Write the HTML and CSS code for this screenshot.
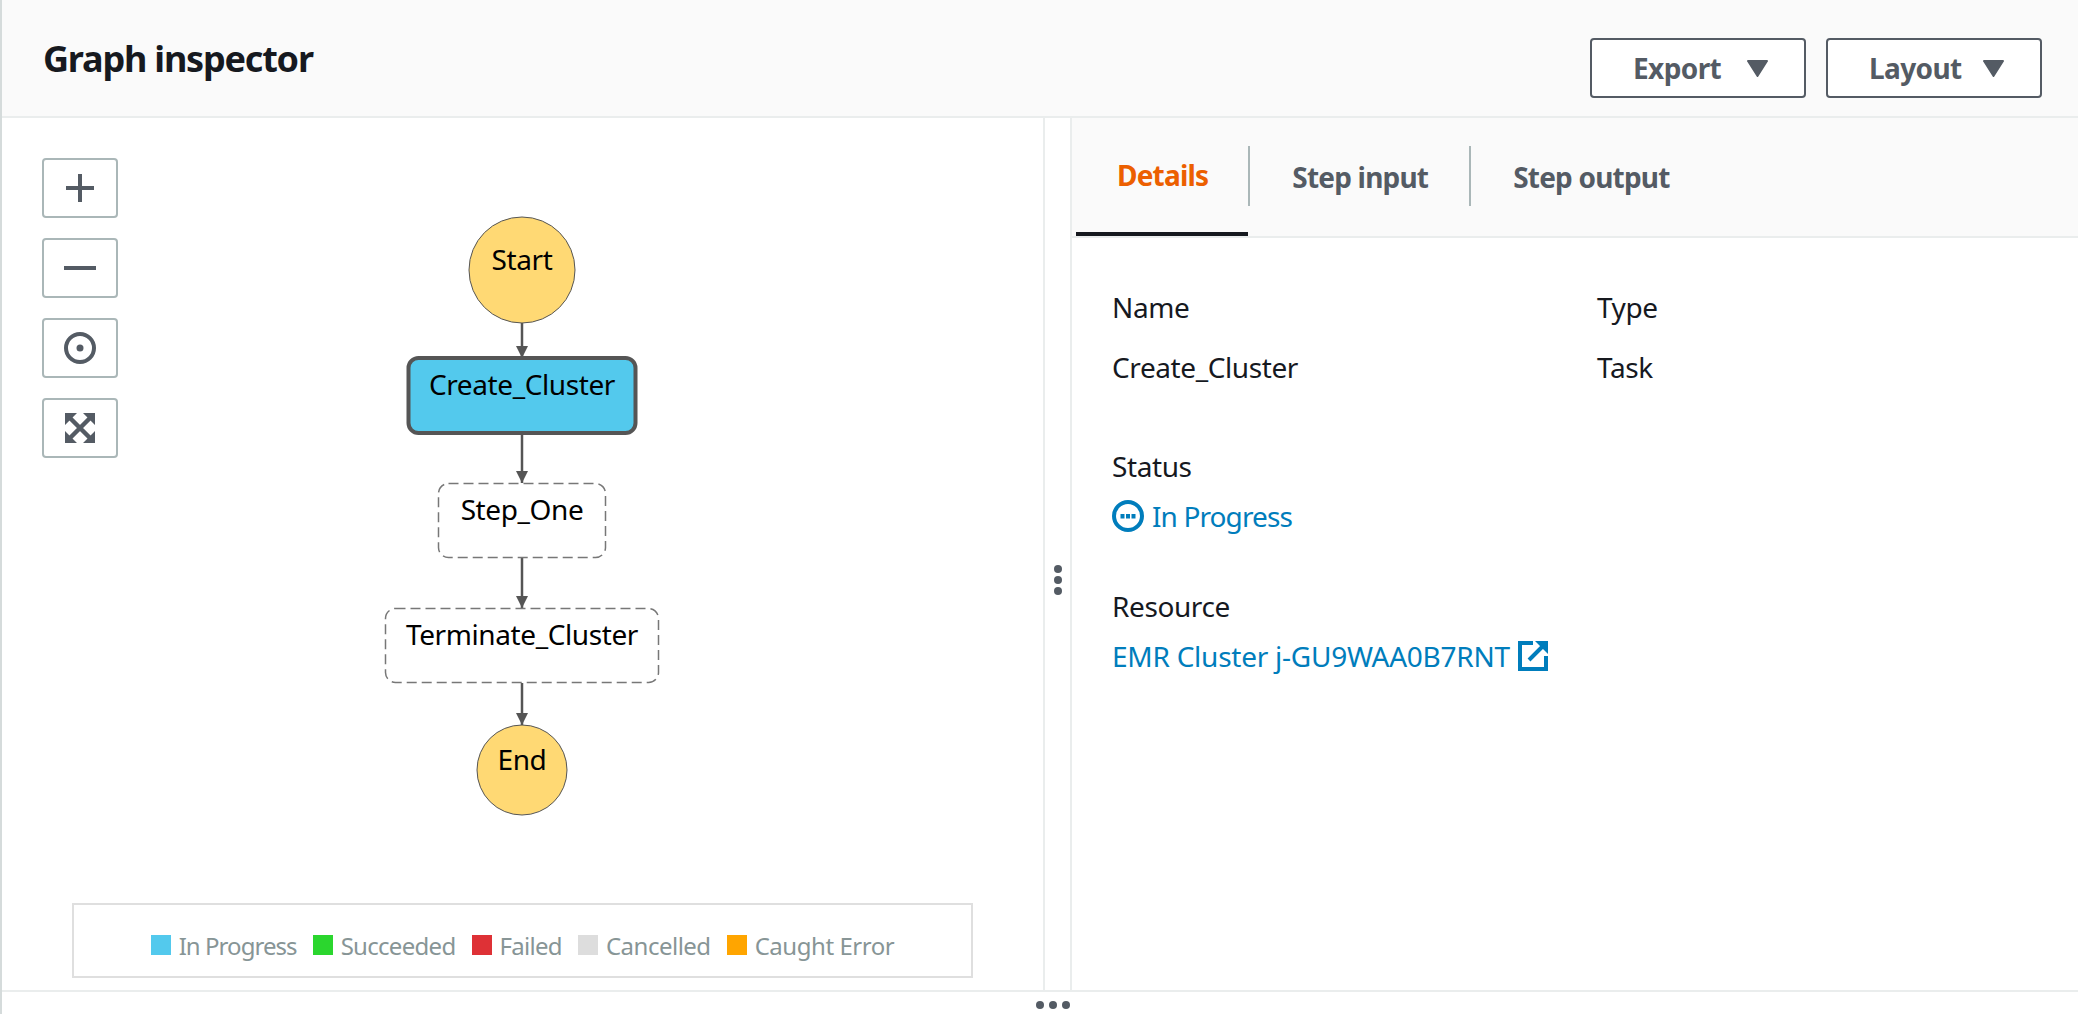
FILE: index.html
```html
<!DOCTYPE html>
<html lang="en">
<head>
    <meta charset="UTF-8">
    <meta name="viewport" content="width=device-width, initial-scale=1.0">
    <title>Graph inspector</title>
    <link rel="stylesheet" href="styles.css">
</head>
<body>

<div class="inspector">
    <header class="top-bar">
        <h2 class="title">Graph inspector</h2>
        <div class="actions">
            <button class="drop-btn">Export <svg class="caret" viewBox="0 0 21 17"><path d="M1 0h19a1 1 0 0 1 .8 1.6L11.3 16.4a1 1 0 0 1-1.6 0L.2 1.6A1 1 0 0 1 1 0z"/></svg></button>
            <button class="drop-btn">Layout <svg class="caret" viewBox="0 0 21 17"><path d="M1 0h19a1 1 0 0 1 .8 1.6L11.3 16.4a1 1 0 0 1-1.6 0L.2 1.6A1 1 0 0 1 1 0z"/></svg></button>
        </div>
    </header>

    <main class="panes">
        <section class="graph-pane">
            <div class="zoom-tools">
                <button class="tool-btn"><svg viewBox="0 0 32 32"><path d="M2 16h28M16 2v28"/></svg></button>
                <button class="tool-btn"><svg viewBox="0 0 32 32"><path d="M0 16h32"/></svg></button>
                <button class="tool-btn"><svg viewBox="0 0 32 32"><circle cx="16" cy="16" r="14"/><circle class="solid" cx="16" cy="16" r="3.5"/></svg></button>
                <button class="tool-btn"><svg viewBox="0 0 32 32"><path class="fat" d="M5 5l22 22M27 5L5 27"/><path class="solid" d="M1 1h12L1 13zM31 1H19l12 12zM1 31h12L1 19zM31 31H19l12-12z"/></svg></button>
            </div>

            <svg class="graph" viewBox="0 0 1043 874" width="1043" height="874">
                <defs>
                    <marker id="arrow" markerWidth="12" markerHeight="12" refX="12" refY="6" orient="auto" markerUnits="userSpaceOnUse">
                        <path d="M0 0L12 6L0 12z" fill="#555"/>
                    </marker>
                </defs>
                <path class="edge" d="M522 205V240" marker-end="url(#arrow)"/>
                <path class="edge" d="M522 317V365" marker-end="url(#arrow)"/>
                <path class="edge" d="M522 440V490" marker-end="url(#arrow)"/>
                <path class="edge" d="M522 565V607" marker-end="url(#arrow)"/>

                <ellipse class="terminal" cx="522" cy="152" rx="53" ry="53"/>
                <text class="node-label" x="522" y="152">Start</text>

                <rect class="running" x="408.5" y="240" width="227" height="75" rx="10"/>
                <text class="node-label" x="522" y="277">Create_Cluster</text>

                <rect class="waiting" x="438.5" y="365.5" width="167" height="74" rx="10"/>
                <text class="node-label" x="522" y="402">Step_One</text>

                <rect class="waiting" x="385.5" y="490.5" width="273" height="74" rx="10"/>
                <text class="node-label" x="522" y="527">Terminate_Cluster</text>

                <circle class="terminal" cx="522" cy="652" r="45"/>
                <text class="node-label" x="522" y="652">End</text>
            </svg>

            <div class="legend">
                <span class="legend-item"><i class="swatch progress"></i>In Progress</span>
                <span class="legend-item"><i class="swatch succeeded"></i>Succeeded</span>
                <span class="legend-item"><i class="swatch failed"></i>Failed</span>
                <span class="legend-item"><i class="swatch cancelled"></i>Cancelled</span>
                <span class="legend-item"><i class="swatch caught"></i>Caught Error</span>
            </div>
        </section>

        <div class="splitter">
            <span class="dot"></span><span class="dot"></span><span class="dot"></span>
        </div>

        <section class="detail-pane">
            <nav class="tabs">
                <a class="tab active">Details</a>
                <a class="tab">Step input</a>
                <a class="tab">Step output</a>
            </nav>
            <div class="detail-body">
                <div class="detail-row">
                    <div class="field">
                        <div class="field-label">Name</div>
                        <div class="field-value">Create_Cluster</div>
                    </div>
                    <div class="field">
                        <div class="field-label">Type</div>
                        <div class="field-value">Task</div>
                    </div>
                </div>
                <div class="field block">
                    <div class="field-label">Status</div>
                    <div class="field-value link status-text">
                        <svg class="status-icon" viewBox="0 0 32 32"><circle cx="16" cy="16" r="14"/><path class="status-dots" d="M8.5 14h4v4.5h-4zM14 14h4v4.5h-4zM19.5 14h4v4.5h-4z"/></svg>
                        In Progress
                    </div>
                </div>
                <div class="field block">
                    <div class="field-label">Resource</div>
                    <div class="field-value link resource-text">
                        EMR Cluster j-GU9WAA0B7RNT
                        <svg class="ext-icon" viewBox="0 0 30 30"><path d="M15 2H2v26h26V15M11 19L24 6"/><path class="ext-head" d="M17 0h13v13z"/></svg>
                    </div>
                </div>
            </div>
        </section>
    </main>

    <footer class="bottom-handle">
        <span class="dot"></span><span class="dot"></span><span class="dot"></span>
    </footer>
</div>

</body>
</html>
```
FILE: styles.css
```css
* {
    box-sizing: border-box;
}
body {
    margin: 0;
    font-family: "Noto Sans", Arial, sans-serif;
    color: #16191f;
    background: #fff;
}
.inspector {
    display: flex;
    flex-direction: column;
    height: 1014px;
    border-left: 2px solid #d5dbdb;
    overflow: hidden;
}
.top-bar {
    display: flex;
    justify-content: space-between;
    height: 118px;
    flex: none;
    padding: 38px 36px 0 41px;
    background: #fafafa;
    border-bottom: 2px solid #eaeded;
}
.title {
    margin: -1px 0 0;
    font-size: 36px;
    line-height: 44px;
    font-weight: 700;
    letter-spacing: -1.2px;
}
.actions {
    display: flex;
    gap: 20px;
}
.drop-btn {
    display: flex;
    align-items: center;
    width: 216px;
    height: 60px;
    padding: 0 36px 0 41px;
    font: 700 28px "Noto Sans", Arial, sans-serif;
    letter-spacing: -0.6px;
    color: #545b64;
    background: #fff;
    border: 2px solid #545b64;
    border-radius: 4px;
}
.caret {
    width: 21px;
    height: 17px;
    margin-left: auto;
    fill: #545b64;
}
.panes {
    display: flex;
    flex: 1;
    min-height: 0;
    border-bottom: 2px solid #eaeded;
}
.graph-pane {
    position: relative;
    width: 1041px;
    flex: none;
}
.zoom-tools {
    position: absolute;
    top: 40px;
    left: 40px;
    display: flex;
    flex-direction: column;
    gap: 20px;
}
.tool-btn {
    display: flex;
    align-items: center;
    justify-content: center;
    width: 76px;
    height: 60px;
    padding: 0;
    background: #fff;
    border: 2px solid #aab7b8;
    border-radius: 4px;
}
.tool-btn svg {
    width: 32px;
    height: 32px;
    fill: none;
    stroke: #545b64;
    stroke-width: 4;
}
.tool-btn .solid {
    fill: #545b64;
    stroke: none;
}
.tool-btn .fat {
    stroke-width: 4.5;
}
.graph {
    display: block;
    margin-left: -2px;
}
.edge {
    fill: none;
    stroke: #555;
    stroke-width: 2.5;
}
.terminal {
    fill: #ffd974;
    stroke: #555;
    stroke-width: 1;
}
.running {
    fill: #53c9ed;
    stroke: #555;
    stroke-width: 4;
}
.waiting {
    fill: #fff;
    stroke: #777;
    stroke-width: 1.5;
    stroke-dasharray: 10 5;
}
.node-label {
    font-size: 28px;
    letter-spacing: -0.4px;
    text-anchor: middle;
    fill: #000;
}
.legend {
    position: absolute;
    left: 70px;
    top: 785px;
    display: flex;
    align-items: center;
    justify-content: center;
    gap: 16px;
    width: 901px;
    height: 75px;
    padding-top: 9px;
    font-size: 24px;
    letter-spacing: -0.7px;
    color: #879596;
    border: 2px solid #dfdfdf;
}
.legend-item {
    display: flex;
    align-items: center;
    gap: 8px;
}
.legend-item:first-child {
    letter-spacing: -0.95px;
}
.legend-item:nth-child(4) {
    letter-spacing: -0.5px;
}
.legend-item:last-child {
    letter-spacing: -0.45px;
}
.swatch {
    width: 20px;
    height: 20px;
}
.progress { background: #53c9ed; }
.succeeded { background: #2bd62e; }
.failed { background: #de3136; }
.cancelled { background: #dddddd; }
.caught { background: #ffa500; }
.splitter {
    display: flex;
    flex-direction: column;
    align-items: center;
    justify-content: center;
    gap: 3px;
    width: 29px;
    flex: none;
    padding-top: 52px;
    border-left: 2px solid #eaeded;
    border-right: 2px solid #eaeded;
}
.dot {
    width: 8px;
    height: 8px;
    border-radius: 50%;
    background: #545b64;
}
.detail-pane {
    flex: 1;
}
.tabs {
    display: flex;
    height: 120px;
    padding: 0 0 0 4px;
    background: #fafafa;
    border-bottom: 2px solid #eaeded;
}
.tab {
    position: relative;
    display: flex;
    align-items: center;
    height: 118px;
    padding: 0 41px 0 44px;
    font-size: 28px;
    font-weight: 700;
    letter-spacing: -0.8px;
    color: #545b64;
}
.tab + .tab::before {
    content: "";
    position: absolute;
    left: 0;
    top: 28px;
    width: 2px;
    height: 60px;
    background: #aab7b8;
}
.tab.active {
    padding: 0 40px 0 41px;
    color: #ec5f00;
    border-bottom: 4px solid #16191f;
}
.detail-body {
    padding: 49px 40px;
    font-size: 28px;
}
.detail-row {
    display: flex;
    margin-bottom: 59px;
}
.detail-row .field {
    width: 485px;
}
.field.block {
    margin-top: 50px;
}
.field-label {
    line-height: 40px;
    letter-spacing: -0.4px;
}
.field-value {
    margin-top: 20px;
    line-height: 40px;
    letter-spacing: -0.4px;
}
.link {
    display: flex;
    align-items: center;
    gap: 8px;
    margin-top: 10px;
    color: #007dbc;
}
.status-text {
    letter-spacing: -0.9px;
}
.resource-text {
    letter-spacing: -0.25px;
}
.status-icon {
    width: 32px;
    height: 32px;
    fill: none;
    stroke: #007dbc;
    stroke-width: 4;
}
.status-dots {
    fill: #007dbc;
    stroke: none;
}
.ext-icon {
    width: 30px;
    height: 30px;
    fill: none;
    stroke: #007dbc;
    stroke-width: 4;
}
.ext-head {
    fill: #007dbc;
    stroke: none;
}
.bottom-handle {
    display: flex;
    flex: none;
    align-items: center;
    justify-content: flex-end;
    gap: 5px;
    height: 22px;
    padding: 4px 6px 0 0;
    margin-right: 1002px;
}
```
